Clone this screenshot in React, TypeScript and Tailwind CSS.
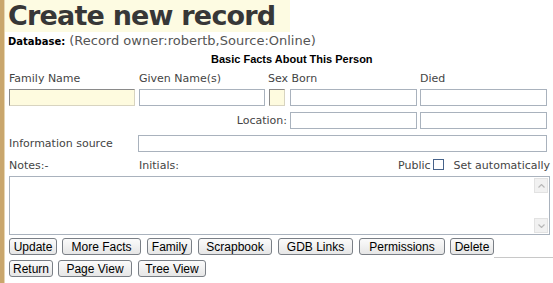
import React from "react";

const V = { fontFamily: '"DejaVu Sans", Verdana, sans-serif' };
const A = { fontFamily: '"Liberation Sans", Arial, sans-serif' };

function Input({ w, yellow }: { w: string; yellow?: boolean }) {
  return (
    <div
      className={`${w} h-[17px] border ${
        yellow
          ? "bg-[#fefbdf] border-t-[#8a8a8a] border-l-[#8a8a8a] border-r-[#d8d4c0] border-b-[#d8d4c0]"
          : "bg-white border-[#a9b2bd]"
      }`}
    />
  );
}

function Btn({ w, children }: { w: string; children: React.ReactNode }) {
  return (
    <div
      className={`${w} h-[17px] flex items-center justify-center rounded-[3px] border border-[#7a7f86] bg-gradient-to-b from-[#fbfbfb] to-[#e6e6e6] text-[12px] text-black leading-none`}
      style={A}
    >
      {children}
    </div>
  );
}

export default function App() {
  return (
    <div className="w-[553px] h-[283px] bg-white flex overflow-hidden">
      <div className="w-[4px] h-full bg-[#c9a66c]" />
      <div className="w-[1px] h-full bg-[#e6d6b4]" />
      <div className="flex-1 flex flex-col">
        <div
          className="w-[285px] h-[32px] bg-[#fdfbe2] pl-[3px] text-[27px] font-bold text-[#373737] leading-[32px] tracking-[-0.8px] whitespace-nowrap"
          style={V}
        >
          Create new record
        </div>
        <div className="h-[15px] flex items-end pl-[3px] leading-none whitespace-nowrap">
          <span className="text-[10px] font-bold text-black" style={V}>
            Database:
          </span>
          <span className="ml-[4px] text-[13px] text-[#555]" style={V}>
            (Record owner:robertb,Source:Online)
          </span>
        </div>
        <div
          className="h-[18px] pl-[206px] flex items-end text-[11px] font-bold text-black leading-none"
          style={A}
        >
          Basic Facts About This Person
        </div>
        <div className="pl-[4px] flex flex-col text-[11px] text-[#444]" style={V}>
          <div className="h-[19px] flex items-end leading-none">
            <div className="w-[130px]">Family Name</div>
            <div className="w-[129px]">Given Name(s)</div>
            <div className="w-[152px]">Sex Born</div>
            <div>Died</div>
          </div>
          <div className="mt-[5px] flex">
            <Input w="w-[126px]" yellow />
            <div className="w-[4px]" />
            <Input w="w-[126px]" />
            <div className="w-[4px]" />
            <Input w="w-[16px]" yellow />
            <div className="w-[5px]" />
            <Input w="w-[127px]" />
            <div className="w-[3px]" />
            <Input w="w-[127px]" />
          </div>
          <div className="mt-[6px] flex items-center">
            <div className="w-[281px] pr-[3px] text-right leading-none">Location:</div>
            <Input w="w-[127px]" />
            <div className="w-[3px]" />
            <Input w="w-[127px]" />
          </div>
          <div className="mt-[6px] flex items-center">
            <div className="w-[129px] leading-none">Information source</div>
            <Input w="w-[409px]" />
          </div>
          <div className="h-[19px] flex items-end leading-none">
            <div className="w-[130px]">Notes:-</div>
            <div className="w-[259px]">Initials:</div>
            <div className="flex items-end">
              <span>Public</span>
              <span className="ml-[2px] mb-[1px] w-[11px] h-[11px] border border-[#46628a] bg-white" />
              <span className="ml-[10px]">Set automatically</span>
            </div>
          </div>
          <div className="mt-[5px] w-[541px] h-[59px] border border-[#a9b2bd] bg-white flex justify-end">
            <div className="w-[16px] h-full flex flex-col justify-between p-[1px]">
              <div className="h-[15px] bg-[#f1f1f1] border border-[#e2e2e2] flex items-center justify-center">
                <svg width="7" height="4" viewBox="0 0 7 4">
                  <path d="M0.5 3.5 L3.5 0.5 L6.5 3.5" fill="none" stroke="#b8b8b8" strokeWidth="1.2" />
                </svg>
              </div>
              <div className="h-[15px] bg-[#f1f1f1] border border-[#e2e2e2] flex items-center justify-center">
                <svg width="7" height="4" viewBox="0 0 7 4">
                  <path d="M0.5 0.5 L3.5 3.5 L6.5 0.5" fill="none" stroke="#b8b8b8" strokeWidth="1.2" />
                </svg>
              </div>
            </div>
          </div>
        </div>
        <div className="mt-[3px] pl-[4px] flex">
          <Btn w="w-[48px]">Update</Btn>
          <div className="w-[5px]" />
          <Btn w="w-[79px]">More Facts</Btn>
          <div className="w-[6px]" />
          <Btn w="w-[45px]">Family</Btn>
          <div className="w-[6px]" />
          <Btn w="w-[74px]">Scrapbook</Btn>
          <div className="w-[6px]" />
          <Btn w="w-[75px]">GDB Links</Btn>
          <div className="w-[6px]" />
          <Btn w="w-[86px]">Permissions</Btn>
          <div className="w-[5px]" />
          <Btn w="w-[44px]">Delete</Btn>
          <div className="flex-1 h-[20px] border-b border-[#c8c8c8]" />
        </div>
        <div className="mt-[2px] pl-[4px] flex">
          <Btn w="w-[44px]">Return</Btn>
          <div className="w-[5px]" />
          <Btn w="w-[74px]">Page View</Btn>
          <div className="w-[6px]" />
          <Btn w="w-[68px]">Tree View</Btn>
        </div>
      </div>
    </div>
  );
}
